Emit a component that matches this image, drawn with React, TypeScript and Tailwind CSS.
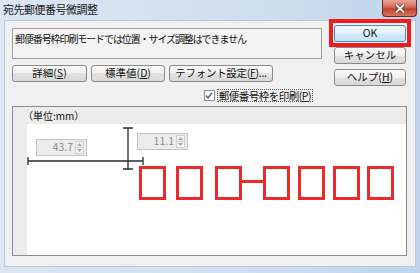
import type { ReactNode } from "react";
import clsx from "clsx";

// ── Pieces ─────────────────────────────────────────────────────────────────────
function Btn({ children, className, isDefault }: { children: ReactNode; className?: string; isDefault?: boolean }) {
  return (
    <div
      className={clsx(
        "flex h-[17px] items-center justify-center rounded-[3px] border text-[10.5px] leading-none text-[#111]",
        isDefault
          ? "border-[#4a8bc0] bg-[linear-gradient(#f1f9fe,#e3f3fc_50%,#d2ecfb_50%,#c4e4f7)]"
          : "border-[#8a8a8a] bg-[linear-gradient(#fafafa,#efefef_50%,#e3e3e3_50%,#d8d8d8)]",
        className,
      )}
    >
      {children}
    </div>
  );
}

const U = ({ children }: { children: ReactNode }) => <span className="underline underline-offset-1">{children}</span>;

function Spin({ value, className }: { value: string; className?: string }) {
  return (
    <div className={clsx("absolute flex h-[17px] w-[51px] items-center border border-[#c4c4c4] bg-[#ececec]", className)}>
      <span className="flex-1 pr-[2px] text-right text-[10.5px] leading-none text-[#8c8c8c]">{value}</span>
      <div className="mr-[2px] flex h-[13px] w-[9px] flex-col border border-[#cfcfcf] bg-[#f4f4f4]">
        <div className="flex flex-1 items-center justify-center border-b border-[#cfcfcf]">
          <svg width="5" height="3" viewBox="0 0 5 3"><path d="M0 3 2.5 0 5 3z" fill="#a8a8a8" /></svg>
        </div>
        <div className="flex flex-1 items-center justify-center">
          <svg width="5" height="3" viewBox="0 0 5 3"><path d="M0 0 2.5 3 5 0z" fill="#a8a8a8" /></svg>
        </div>
      </div>
    </div>
  );
}

// ── Page ──────────────────────────────────────────────────────────────────────
export default function App() {
  const boxes = [112, 149, 188, 236, 271, 306, 340];

  return (
    <div className="relative flex h-[273px] w-[420px] flex-col overflow-hidden bg-[linear-gradient(90deg,#dbe6f2,#cfdeef_60%,#c0d4ec)] font-['Noto_Sans_CJK_JP',sans-serif]">
      {/* Title bar */}
      <div className="flex h-[20px] shrink-0 items-start justify-between">
        <span className="pl-[3px] pt-[2px] text-[11px] leading-[14px] tracking-[-0.5px] text-[#1a1a1a]">宛先郵便番号微調整</span>
        <div className="mr-[3px] flex h-[17px] w-[35px] items-center justify-center rounded-b-[4px] border border-t-0 border-[#6d2a22] bg-[linear-gradient(#e9a899,#d46a55_45%,#c2432c_55%,#d9745b)]">
          <svg width="10" height="9" viewBox="0 0 10 9">
            <path d="M1.5 1 8.5 8M8.5 1 1.5 8" stroke="#5a1a12" strokeWidth="3.4" strokeLinecap="square" />
            <path d="M1.5 1 8.5 8M8.5 1 1.5 8" stroke="#ffffff" strokeWidth="2" strokeLinecap="square" />
          </svg>
        </div>
      </div>

      {/* Client area */}
      <div className="mx-[4px] mb-[6px] flex flex-1 flex-col border border-[#b9c9dc] bg-[#f0f0f0] px-[7px] pt-[3px]">
        <div className="flex gap-[11px]">
          {/* Left column */}
          <div className="flex w-[310px] flex-col pt-[4px]">
            <div className="flex h-[31px] items-start overflow-hidden whitespace-nowrap border border-[#a0a0a0] bg-[#f3f3f3] px-[2px] pt-[5px] text-[10px] leading-none tracking-[-1.1px] text-[#111]">
              郵便番号枠印刷モードでは位置・サイズ調整はできません
            </div>
            <div className="mt-[6px] flex gap-[4px]">
              <Btn className="w-[75px]">詳細(<U>S</U>)</Btn>
              <Btn className="w-[74px]">標準値(<U>D</U>)</Btn>
              <Btn className="w-[104px] tracking-[-0.3px]">テフォント設定(<U>F</U>)...</Btn>
            </div>
            <div className="mt-[6px] flex h-[14px] items-center justify-end pr-[9px]">
              <div className="flex h-[11px] w-[11px] items-center justify-center border border-[#8e8f8f] bg-white">
                <svg width="8" height="7" viewBox="0 0 8 7"><path d="M1 3.5 3 6 7 0.8" fill="none" stroke="#4a5f97" strokeWidth="1.4" /></svg>
              </div>
              <span className="ml-[2px] border border-dotted border-[#555] px-[1px] text-[10.5px] leading-[11px] tracking-[-0.5px] text-[#111]">
                郵便番号枠を印刷(<U>P</U>)
              </span>
            </div>
          </div>

          {/* Right column */}
          <div className="relative flex w-[72px] flex-col gap-[5px] pl-[1px] pt-[1px]">
            <div className="pointer-events-none absolute left-[-4px] top-[-5px] h-[28px] w-[82px] border-[4px] border-[#ee1c1c]" />
            <Btn isDefault className="w-[72px]">OK</Btn>
            <Btn className="w-[72px]">キャンセル</Btn>
            <Btn className="w-[72px]">ヘルプ(<U>H</U>)</Btn>
          </div>
        </div>

        {/* Group frame */}
        <div className="mt-[4px] flex h-[150px] w-[395px] flex-col border border-[#8d8d8d] bg-[#ececec]">
          <div className="flex h-[17px] shrink-0 items-center pl-[10px] text-[10px] leading-none text-[#111]">（単位:mm）</div>
          <div className="flex flex-1">
            <div className="w-[14px] shrink-0" />
            <div className="relative flex-1 bg-white">
              <svg className="absolute left-0 top-0" width="380" height="132" viewBox="0 0 380 132">
                <g stroke="#2a2a2a" strokeWidth="1.3" fill="none">
                  <path d="M1 37H116M1 33V41M116 33V41" />
                  <path d="M101 4V45M96 4H106M96 45H106" />
                </g>
                <g stroke="#ec2a2a" strokeWidth="3" fill="none">
                  {boxes.map((x) => (
                    <rect key={x} x={x + 1.5} y={43.5} width={24} height={31} />
                  ))}
                  <path d="M214 57.5H237" />
                </g>
              </svg>
              <Spin value="43.7" className="left-[9px] top-[15px]" />
              <Spin value="11.1" className="left-[110px] top-[9px]" />
            </div>
          </div>
        </div>
      </div>
    </div>
  );
}
